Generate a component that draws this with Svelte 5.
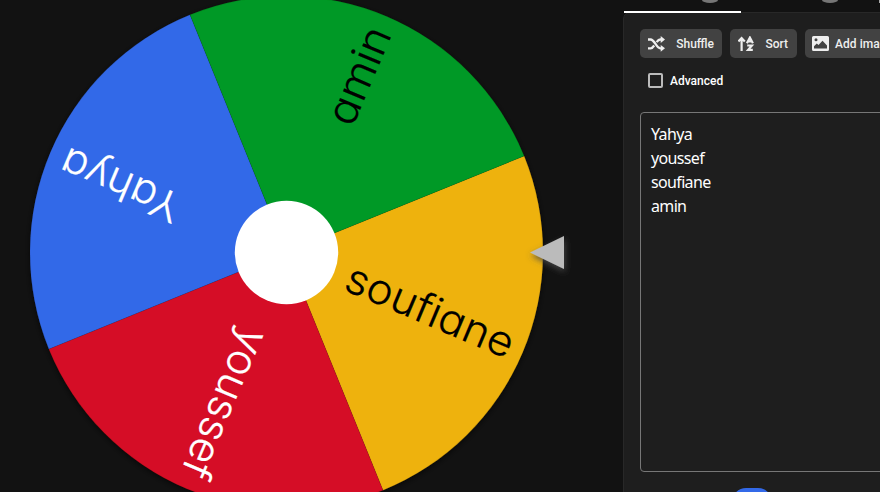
<script>
  const names = ['Yahya', 'youssef', 'soufiane', 'amin'];
  const slices = [
    { name: 'soufiane', turn: 23, fill: '#eeb211', ink: '#000', start: 65.5, length: 179 },
    { name: 'youssef', turn: 113, fill: '#d50f25', ink: '#fff', start: 84, length: 158.5 },
    { name: 'Yahya', turn: 203, fill: '#3369e8', ink: '#fff', start: 116, length: 126.5 },
    { name: 'amin', turn: 293, fill: '#009925', ink: '#000', start: 140, length: 102.5 }
  ];
  const R = 256.5;
  const c = R * Math.SQRT1_2;
  const wedge = `M0 0L${c} ${-c}A${R} ${R} 0 0 1 ${c} ${c}Z`;
</script>

<main>
  <section class="stage">
    <svg class="wheel" width="623" height="492" viewBox="0 0 623 492">
      <defs>
        <filter id="wheelShadow" x="-10%" y="-10%" width="120%" height="120%">
          <feDropShadow dx="0" dy="2" stdDeviation="3" flood-color="#000" flood-opacity=".6" />
        </filter>
        <filter id="pointerShadow" x="-50%" y="-50%" width="200%" height="200%">
          <feDropShadow dx="1" dy="3" stdDeviation="3" flood-color="#4b4b4b" flood-opacity=".85" />
        </filter>
      </defs>
      <g transform="translate(286.5 252.5)">
        <g filter="url(#wheelShadow)">
          {#each slices as s}
            <path d={wedge} fill={s.fill} stroke="#000" stroke-opacity=".12" stroke-width=".5" transform="rotate({s.turn - 0.1})" />
          {/each}
        </g>
        {#each slices as s}
          <text transform="rotate({s.turn})" x={s.start} y="12" fill={s.ink} stroke={s.ink} textLength={s.length} lengthAdjust="spacingAndGlyphs">{s.name}</text>
        {/each}
        <circle r="51.7" fill="#fff" />
      </g>
      <path d="M530 252.5L564 236V269Z" fill="#bbb" filter="url(#pointerShadow)" />
    </svg>
  </section>

  <aside>
    <div class="tabs">
      <div class="tab active"><i></i></div>
      <div class="tab"><i></i></div>
      <div class="tab"><i></i></div>
    </div>
    <div class="panel">
      <div class="tools">
        <button class="shuffle">
          <svg width="17" height="16" viewBox="0 0 17 16" fill="none" stroke="#eee" stroke-width="2.3">
            <path d="M0 3.5H2.6C6.5 3.5 8.5 12.3 12.3 12.3H14M0 12.3H2.6C4.2 12.3 5.2 11 6.2 9.5M8.6 6.1C9.8 4.5 10.8 3.5 12.3 3.5H14" />
            <path d="M12.7 .1L17 3.5L12.7 6.9ZM12.7 8.9L17 12.3L12.7 15.7Z" fill="#eee" stroke="none" />
          </svg>
          <span>Shuffle</span>
        </button>
        <button class="sort">
          <svg width="17" height="16" viewBox="0 0 17 16" fill="none" stroke="#eee" stroke-width="2.2">
            <path d="M3.6 15V2.5M.4 5.5L3.6 2.2L6.8 5.5" />
            <path d="M8.9 7.3L11.9 1.6L14.9 7.3M10.2 5.4H13.6M9.2 9.5H13.9L10.1 13.9H14.8" />
          </svg>
          <span>Sort</span>
        </button>
        <button class="image">
          <svg width="17" height="15" viewBox="0 0 17 15">
            <path fill="#eee" fill-rule="evenodd" d="M1.5 0H15.5Q17 0 17 1.5V13.5Q17 15 15.5 15H1.5Q0 15 0 13.5V1.5Q0 0 1.5 0ZM2 12.5H15V9.5L10.5 4.8L6.5 9L4.8 7.5L2 10.2ZM4 2.2A1.5 1.5 0 1 0 4 5.2A1.5 1.5 0 1 0 4 2.2Z" />
          </svg>
          <span>Add image</span>
        </button>
      </div>
      <label><b></b>Advanced</label>
      <div class="entries">
        {#each names as n}<div>{n}</div>{/each}
      </div>
      <div class="pill"></div>
    </div>
  </aside>
</main>

<style>
  :global(body) { background: #121212; overflow: hidden; }
  main { display: flex; width: 880px; height: 492px; overflow: hidden; background: #121212; font-family: Roboto, "Liberation Sans", sans-serif; }
  .stage { flex: 0 0 623px; }
  .wheel { display: block; }
  .wheel text { font: 300 42px Inter, "Liberation Sans", sans-serif; font-feature-settings: "cv11", "ss03"; stroke-width: .2px; stroke-linejoin: round; }
  aside { flex: 0 0 257px; overflow: hidden; }
  .tabs { display: flex; height: 12px; padding-left: 1px; }
  .tab { flex: 0 0 117px; height: 12px; }
  .tab i { display: block; width: 16px; height: 3px; margin-left: 78px; border-radius: 0 0 8px 8px / 0 0 3px 3px; background: #757575; }
  .tab:nth-child(2) i { margin-left: 81px; }
  .tab:nth-child(3) i { width: 6px; margin-left: 21px; border-radius: 0; background: #aaa; }
  .active { border-bottom: 2px solid #fff; height: 11px; position: relative; z-index: 1; }
  .panel { box-sizing: border-box; width: 300px; height: 520px; padding: 16px; border: 1px solid #282828; border-radius: 7px; background: #1e1e1e; }
  .tools { display: flex; gap: 8px; }
  button { display: flex; align-items: center; box-sizing: border-box; height: 29px; padding: 0 8px; border: 0; border-radius: 5px; background: #424242; color: #eee; font: 500 12px Roboto, sans-serif; flex-shrink: 0; white-space: nowrap; }
  button svg { flex-shrink: 0; }
  .shuffle { width: 82px; justify-content: space-between; }
  .sort { width: 67px; justify-content: space-between; padding-right: 9px; }
  .image { width: 106px; gap: 6px; padding-left: 7px; }
  .image span { letter-spacing: .05px; }
  label { display: flex; align-items: center; gap: 7px; height: 16px; margin: 15px 0 0 8px; color: #fff; font-size: 12px; font-weight: 500; }
  label b { box-sizing: border-box; width: 15px; height: 15px; margin-top: -1px; border: 2px solid #bbb; border-radius: 2px; }
  .entries { box-sizing: border-box; width: 280px; height: 360px; margin-top: 23px; padding: 9px 10px; border: 1px solid #777; border-radius: 4px; color: #fff; font: 16px/24px "Noto Sans", "Open Sans", sans-serif; letter-spacing: -.65px; }
  .pill { width: 40px; height: 28px; margin: 16px 0 0 92px; border-radius: 14px; background: #3369e8; }
</style>
